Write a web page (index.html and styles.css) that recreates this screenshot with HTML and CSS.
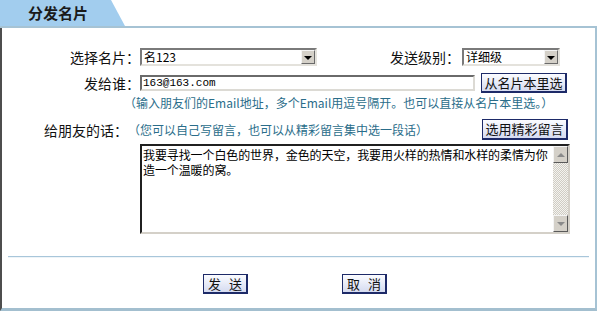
FILE: index.html
```html
<!DOCTYPE html>
<html lang="zh-CN">
<head>
    <meta charset="UTF-8">
    <title>分发名片</title>
    <link rel="stylesheet" href="styles.css">
</head>
<body>
    <div class="panel">
        <div class="panel-head">
            <div class="tab">分发名片</div>
        </div>

        <div class="panel-body">
            <form class="card-form">
                <div class="row row-card">
                    <label class="label">选择名片：</label>
                    <div class="field">
                        <div class="select select-card">
                            <span class="select-text">名123</span>
                            <span class="select-arrow"></span>
                        </div>
                        <label class="label label-level">发送级别：</label>
                        <div class="select select-level">
                            <span class="select-text">详细级</span>
                            <span class="select-arrow"></span>
                        </div>
                    </div>
                </div>

                <div class="row row-to">
                    <label class="label">发给谁：</label>
                    <div class="field">
                        <input class="text-input" type="text" value="163@163.com">
                        <button type="button" class="btn btn-pick">从名片本里选</button>
                    </div>
                </div>

                <div class="row row-hint">
                    <span class="label"></span>
                    <div class="field hint">（输入朋友们的Email地址，多个Email用逗号隔开。也可以直接从名片本里选。）</div>
                </div>

                <div class="row row-msg">
                    <label class="label label-msg">给朋友的话：</label>
                    <div class="field">
                        <span class="hint hint-msg">（您可以自己写留言，也可以从精彩留言集中选一段话）</span>
                        <button type="button" class="btn btn-pick btn-msg">选用精彩留言</button>
                    </div>
                </div>

                <div class="row row-text">
                    <span class="label"></span>
                    <div class="field memo">
                        <div class="memo-text">我要寻找一个白色的世界，金色的天空，我要用火样的热情和水样的柔情为你造一个温暖的窝。</div>
                        <div class="scrollbar">
                            <span class="scroll-btn up"></span>
                            <span class="scroll-track"></span>
                            <span class="scroll-btn down"></span>
                        </div>
                    </div>
                </div>
            </form>

            <div class="divider"></div>

            <div class="actions">
                <button type="button" class="btn btn-action">发 送</button>
                <button type="button" class="btn btn-action">取 消</button>
            </div>
        </div>
    </div>
</body>
</html>
```

FILE: styles.css
```css
body {
    margin: 0;
    background: #fff;
    font-family: "Noto Sans CJK SC", "Liberation Sans", sans-serif;
    font-size: 12px;
    color: #000;
}
.panel {
    width: 597px;
}
.panel-head {
    height: 26px;
    border-bottom: 2px solid #a6c3d4;
}
.tab {
    width: 125px;
    height: 26px;
    background: #a2cdee;
    clip-path: polygon(0 0, 111px 0, 125px 100%, 0 100%);
    padding-left: 28px;
    box-sizing: border-box;
    font-size: 15px;
    font-weight: bold;
    line-height: 26px;
    color: #1a1a1a;
}
.panel-body {
    border-left: 2px solid #4e4e4e;
    border-right: 2px solid #a6c3d4;
    border-bottom: 3px solid #a3bfcf;
    padding: 20px 0 14px;
}

/* form rows */
.card-form {
    display: flex;
    flex-direction: column;
}
.row {
    display: flex;
    align-items: center;
}
.label {
    width: 138px;
    flex: none;
    text-align: right;
    font-size: 14px;
    line-height: 18px;
    color: #111;
}
.field {
    width: 430px;
    display: flex;
    align-items: center;
}
.row-card { height: 18px; }
.row-to { height: 20px; margin-top: 7px; }
.row-hint { margin-top: 3px; }
.row-msg { height: 21px; margin-top: 9px; }
.row-text { margin-top: 4px; }

.label-level {
    width: 70px;
    margin-left: 73px;
    margin-right: 2px;
}
.label-msg {
    padding-right: 12px;
    box-sizing: border-box;
}

.hint {
    color: #2a6d8a;
    line-height: 14px;
    margin-left: -16px;
}
.hint-msg {
    margin-left: -12px;
}

/* fake windows select */
.select {
    height: 18px;
    box-sizing: border-box;
    border: 2px solid;
    border-color: #7a7a7a #e4e2dc #e4e2dc #7a7a7a;
    display: flex;
    align-items: center;
    background: #fff;
}
.select-card { width: 177px; }
.select-level { width: 98px; }
.select-text {
    flex: 1;
    padding-left: 2px;
    line-height: 14px;
}
.select-arrow {
    width: 14px;
    height: 14px;
    box-sizing: border-box;
    background: #d4d0c8;
    border: 1px solid;
    border-color: #f4f4f4 #6a6a6a #6a6a6a #f4f4f4;
    display: flex;
    align-items: center;
    justify-content: center;
}
.select-arrow::after {
    content: "";
    border-left: 4px solid transparent;
    border-right: 4px solid transparent;
    border-top: 4px solid #000;
    margin-top: 1px;
}

.text-input {
    width: 335px;
    height: 16px;
    box-sizing: border-box;
    border: 2px solid;
    border-color: #6a6a6a #dcdad4 #dcdad4 #6a6a6a;
    padding: 0 1px;
    font-family: "Liberation Mono", "Noto Sans CJK SC", monospace;
    font-size: 11px;
    color: #000;
    outline: none;
}

/* buttons */
.btn {
    font-family: "Noto Sans CJK SC", sans-serif;
    font-size: 13px;
    line-height: 16px;
    color: #111;
    border: 1px solid #1d2a68;
    border-right-width: 2px;
    border-bottom-width: 2px;
    background: linear-gradient(#fbfcff, #d5dbf0);
    padding: 0;
    cursor: pointer;
}
.btn-pick {
    width: 86px;
    height: 20px;
    margin-left: 6px;
}
.btn-msg {
    height: 21px;
    margin-left: auto;
    margin-right: 2px;
}

/* message box */
.memo {
    height: 90px;
    box-sizing: border-box;
    border: 2px solid;
    border-color: #202020 #d4d0c8 #d4d0c8 #202020;
    align-items: stretch;
    background: #fff;
}
.memo-text {
    flex: 1;
    padding: 1px 0 1px 1px;
    line-height: 15px;
    letter-spacing: -0.1px;
}
.scrollbar {
    width: 15px;
    display: flex;
    flex-direction: column;
}
.scroll-track {
    flex: 1;
    background: repeating-conic-gradient(#cfccc4 0 25%, #f4f3ef 0 50%) 0 0 / 2px 2px;
}
.scroll-btn {
    height: 17px;
    box-sizing: border-box;
    background: #d4d0c8;
    border: 1px solid;
    border-color: #f4f4f4 #5a5a5a #5a5a5a #f4f4f4;
    display: flex;
    align-items: center;
    justify-content: center;
}
.scroll-btn::after {
    content: "";
    border-left: 4px solid transparent;
    border-right: 4px solid transparent;
}
.scroll-btn.up::after { border-bottom: 4px solid #8a8a8a; }
.scroll-btn.down::after { border-top: 4px solid #8a8a8a; }

.divider {
    margin: 22px 6px 0;
    height: 1px;
    background: #a8c6da;
    border-bottom: 1px solid #eef4f8;
}

.actions {
    display: flex;
    gap: 94px;
    padding-left: 201px;
    margin-top: 16px;
}
.btn-action {
    width: 45px;
    height: 20px;
    word-spacing: 5px;
}
```
